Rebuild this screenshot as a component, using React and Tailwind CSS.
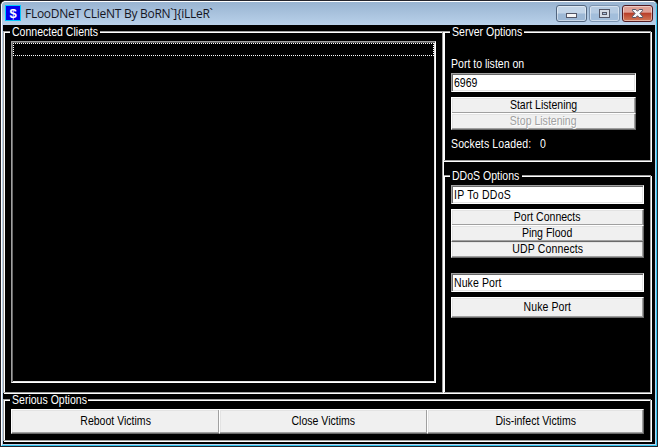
import React from "react";

const buttonFace =
  "relative flex shrink-0 items-center justify-center border border-t-white border-l-white border-r-[#696969] border-b-[#696969] bg-[#f0f0f0] pb-[2px] shadow-[inset_-1px_-1px_0_#a0a0a0,inset_1px_1px_0_#e3e3e3]";

function Text({ children, className = "" }) {
  return (
    <span className={"block scale-x-[0.81] text-[13px] leading-[14px] whitespace-pre " + className}>
      {children}
    </span>
  );
}

function Group({ title, legendWidth, className = "", children }) {
  return (
    <section
      className={
        "relative flex shrink-0 border border-[#a0a0a0] shadow-[1px_1px_0_#fff,inset_1px_1px_0_#fff] " + className
      }
    >
      <h2 className={"absolute -top-[7px] left-[6px] h-[14px] bg-black pl-[2px] text-white " + legendWidth}>
        <Text className="origin-left">{title}</Text>
      </h2>
      {children}
    </section>
  );
}

function Button({ children, className = "text-black" }) {
  return (
    <button className={buttonFace + " " + className}>
      <Text>{children}</Text>
    </button>
  );
}

function Field({ children, className = "" }) {
  return (
    <div
      className={
        "flex h-[19px] shrink-0 items-center border border-t-[#a0a0a0] border-l-[#a0a0a0] border-r-white border-b-white bg-white pl-[2px] text-black shadow-[inset_1px_1px_0_#696969,inset_-1px_-1px_0_#e3e3e3] " +
        className
      }
    >
      <Text className="origin-left">{children}</Text>
    </div>
  );
}

function WindowButtons() {
  const face =
    "flex h-[17px] w-[31px] items-center justify-center rounded-[3px] border shadow-[inset_0_0_0_1px_rgba(255,255,255,0.45)]";
  return (
    <div className="ml-auto flex gap-[2px]">
      <button className={face + " border-[#52667f] bg-linear-to-b from-[#c3d5e8] from-45% to-[#9db8d5] to-55%"}>
        <svg width="11" height="9" viewBox="0 0 11 9" shapeRendering="crispEdges">
          <rect x="0.5" y="4.5" width="10" height="4" rx="1" fill="#f5f5f5" stroke="#535666" />
        </svg>
      </button>
      <button className={face + " border-[#7d95b1] bg-linear-to-b from-[#b5cbe2] from-45% to-[#a2bedb] to-55%"}>
        <svg width="11" height="9" viewBox="0 0 11 9" shapeRendering="crispEdges">
          <rect x="0.5" y="0.5" width="10" height="8" fill="#d5dbe4" stroke="#535666" />
          <rect x="3.5" y="3.5" width="4" height="2" fill="#a9c1dc" stroke="#535666" />
        </svg>
      </button>
      <button className={face + " border-[#501a22] bg-linear-to-b from-[#dfa095] from-40% via-[#b9402b] via-50% to-[#d27857]"}>
        <svg width="13" height="11" viewBox="0 0 13 11">
          <path
            d="M1.5 1.5h3.3l1.7 1.8 1.7-1.8h3.3v1.2L8.9 5.5l2.6 2.8v1.2H8.2L6.5 7.7 4.8 9.5H1.5V8.3l2.6-2.8-2.6-2.8z"
            fill="#f8f8f8"
            stroke="#535666"
          />
        </svg>
      </button>
    </div>
  );
}

export default function App() {
  return (
    <div className="h-[447px] w-[658px] overflow-hidden bg-black font-['Liberation_Sans',Arial,sans-serif]">
      <div className="h-[447px] w-[658px] rounded-t-[6px] border border-[#24242c] bg-white">
        <div className="flex h-[445px] flex-col rounded-t-[5px] border border-t-white border-r-[#2fc4ee] border-b-[#2fc4ee] border-l-white bg-[#b9d1ea] pb-px">
          <header className="flex h-[23px] shrink-0 items-start rounded-t-[4px] bg-linear-to-b from-[#99b4d1] to-[#b9d1ea] px-[3px] pt-[3px]">
            <span className="flex h-4 w-4 items-center justify-center border border-[#00c8ff] bg-[#0000f0] text-[13px] leading-none font-bold text-white">
              $
            </span>
            <h1 className="ml-[4px] font-['Open_Sans','Noto_Sans',sans-serif] text-[12px] leading-[17px] tracking-[-0.28px] whitespace-pre text-[#15151f]">
              {"FLooDNeT CLieNT By BoRN`]{iLLeR`"}
            </h1>
            <WindowButtons />
          </header>

          <main className="mx-px flex h-[419px] shrink-0 flex-col bg-black pt-[6px]">
            <div className="flex h-[362px] shrink-0">
              <Group title="Connected Clients" legendWidth="w-[90px]" className="z-10 w-[440px] pt-[9px] pl-[7px]">
                <div className="h-[342px] w-[425px] border border-t-[#a0a0a0] border-r-white border-b-white border-l-[#a0a0a0] p-px shadow-[inset_1px_1px_0_#696969,inset_-1px_-1px_0_#e3e3e3]">
                  <div className="h-[13px] border border-dotted border-white" />
                </div>
              </Group>

              <div className="flex flex-col gap-[14px]">
                <Group title="Server Options" legendWidth="w-[74px]" className="h-[130px] w-[208px] flex-col pt-[25px] pl-[7px] text-white">
                  <Text className="origin-left">Port to listen on</Text>
                  <Field className="mt-[2px] w-[185px]">6969</Field>
                  <Button className="z-10 mt-[5px] -mb-px h-[17px] w-[185px] text-black">Start Listening</Button>
                  <Button className="z-20 h-[17px] w-[185px] text-[#a0a0a0] [text-shadow:1px_1px_0_#fff]">
                    Stop Listening
                  </Button>
                  <div className="mt-[7px] flex">
                    <Text className="w-[89px] origin-left tracking-[0.15px]">Sockets Loaded:</Text>
                    <Text className="origin-left">0</Text>
                  </div>
                </Group>

                <Group title="DDoS Options" legendWidth="w-[72px]" className="h-[218px] w-[208px] flex-col pt-[9px] pl-[7px]">
                  <Field className="w-[193px] tracking-[0.3px]">IP To DDoS</Field>
                  <Button className="z-10 mt-[5px] -mb-px h-[17px] w-[193px] text-black">Port Connects</Button>
                  <Button className="z-20 -mb-px h-[17px] w-[193px] text-black">Ping Flood</Button>
                  <Button className="z-10 h-[17px] w-[193px] tracking-[0.15px] text-black">UDP Connects</Button>
                  <Field className="mt-[15px] w-[193px] tracking-[0.1px]">Nuke Port</Field>
                  <Button className="mt-[5px] h-[21px] w-[193px] tracking-[0.1px] text-black">Nuke Port</Button>
                </Group>
              </div>
            </div>

            <Group title="Serious Options" legendWidth="w-[78px]" className="mt-[6px] h-[42px] w-[648px] pt-[9px] pl-[7px]">
              <Button className="-mr-px h-[25px] w-[209px] text-black">Reboot Victims</Button>
              <Button className="-mr-px h-[25px] w-[209px] text-black">Close Victims</Button>
              <Button className="h-[25px] w-[217px] text-black">Dis-infect Victims</Button>
            </Group>
          </main>
        </div>
      </div>
    </div>
  );
}
